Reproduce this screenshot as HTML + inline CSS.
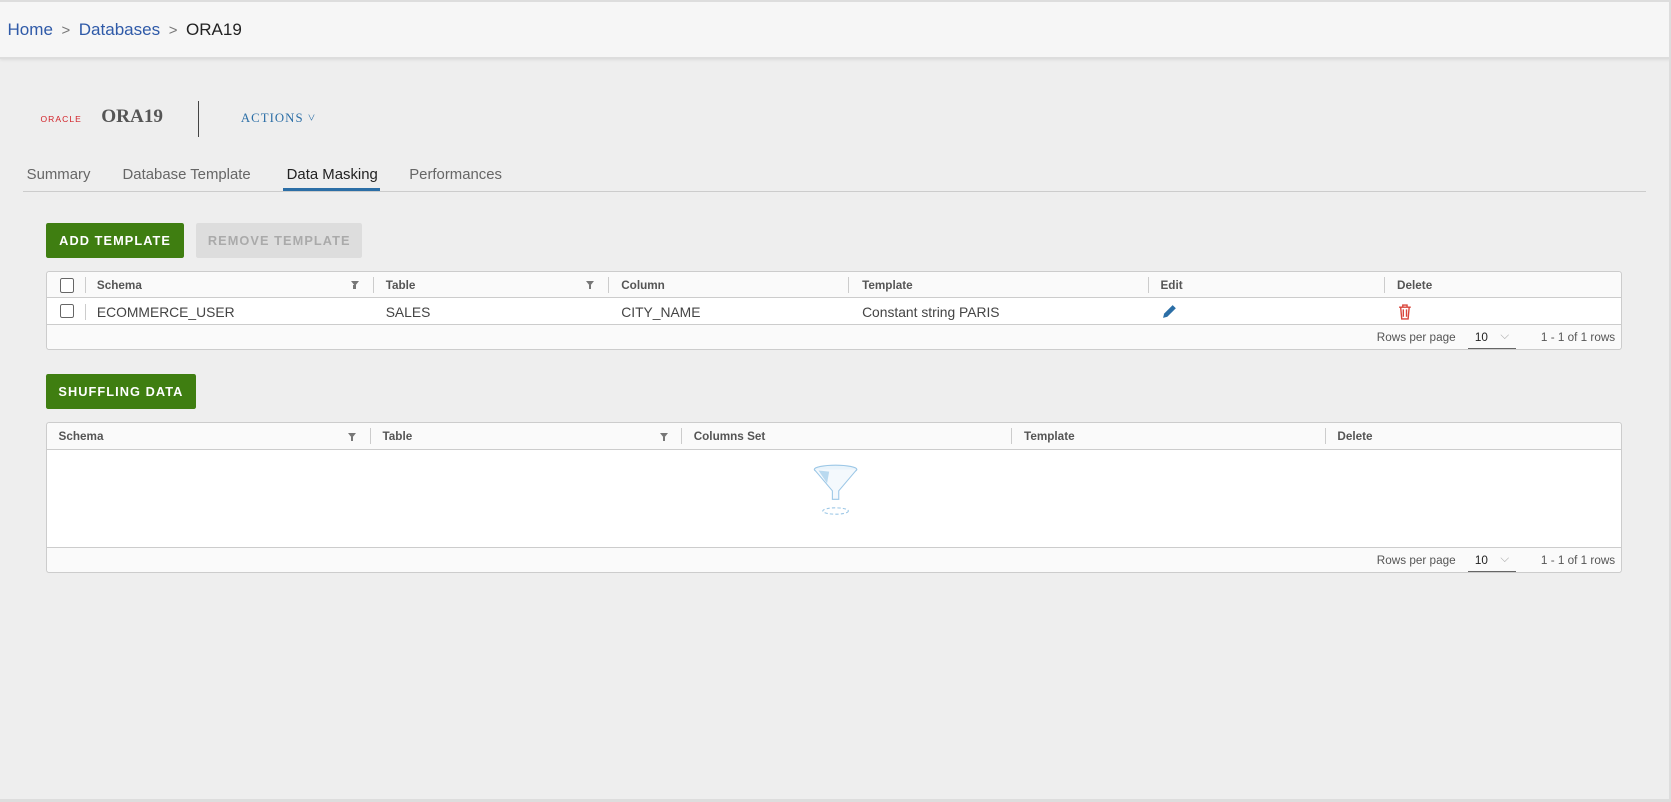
<!DOCTYPE html>
<html><head><style>
html{zoom:1.0657}
body{margin:0;width:1568px;height:753px;background:#eeeeee;font-family:"Liberation Sans",sans-serif;position:relative;overflow:hidden;color:#333}
.top{position:absolute;left:0;top:0;width:1566px;height:52px;background:#f6f6f6;border-top:2px solid #ddd;border-bottom:2px solid #ddd;border-right:2px solid #ddd;box-shadow:0 1px 3px rgba(0,0,0,.08)}
.bc{position:absolute;left:7px;top:17px;font-size:16px;color:#222}
.bc a{color:#2f5aa8;text-decoration:none}
.bc .s{color:#777;margin:0 8px;font-size:14px}
.abs{position:absolute}
.tabs span{position:absolute;top:157px;font-size:14px;color:#666}
.btn{position:absolute;height:33px;line-height:33px;font-size:12px;font-weight:bold;letter-spacing:1px;text-align:center;border-radius:2px}
.grid{position:absolute;left:43px;width:1477px;background:#fff;border:1px solid #ccc;border-radius:3px;font-size:13px;overflow:hidden}
.hd{height:24px;background:#fafafa;border-bottom:1px solid #ccc;position:relative;font-size:11px;font-weight:bold;color:#555}
.hd span,.row span{position:absolute;top:7px}
.sep{position:absolute;top:5px;width:1px;height:15px;background:#ccc}
.row{position:relative;height:24px;border-bottom:1px solid #ccc}
.row span{top:5px;color:#444}
.ft{height:23px;background:#fafafa;position:relative;font-size:11px;color:#555}
.cb{position:absolute;left:12px;width:12px;height:12px;border:1px solid #666;border-radius:2px;background:#fff}
.flt{position:absolute;top:9px;width:0;height:0;border-left:4px solid transparent;border-right:4px solid transparent;border-top:5px solid #777}
.flt:after{content:"";position:absolute;left:-1px;top:-1px;width:2px;height:4px;background:#777}
</style></head><body>
<div class="top"><div class="bc"><a>Home</a><span class="s">&gt;</span><a>Databases</a><span class="s">&gt;</span>ORA19</div></div>
<div class="abs" style="left:38px;top:107px;color:#d2232a;font-size:8px;letter-spacing:1px">ORACLE</div>
<div class="abs" style="left:95px;top:99px;font-family:'Liberation Serif',serif;font-weight:bold;font-size:18px;color:#555">ORA19</div>
<div class="abs" style="left:186px;top:95px;width:1px;height:34px;background:#444"></div>
<div class="abs" style="left:226px;top:104px;font-family:'Liberation Serif',serif;font-size:12px;letter-spacing:1px;color:#2b6ea6">ACTIONS ˅</div>
<div class="tabs"><span style="left:25px">Summary</span><span style="left:115px">Database Template</span><span style="left:269px;color:#222">Data Masking</span><span style="left:384px">Performances</span></div>
<div class="abs" style="left:266px;top:176px;width:91px;height:3px;background:#2b6ea6"></div>
<div class="abs" style="left:22px;top:179px;width:1523px;height:1px;background:#ccc"></div>
<div class="btn" style="left:43px;top:209px;width:130px;background:#3f7e11;color:#fff">ADD TEMPLATE</div>
<div class="btn" style="left:184px;top:209px;width:156px;background:#ddd;color:#aaa">REMOVE TEMPLATE</div>
<div class="grid" style="top:254px">
<div class="hd"><div class="cb" style="top:6px"></div><div class="sep" style="left:36px"></div>
<span style="left:47px">Schema</span><div class="flt" style="left:285px"></div><div class="sep" style="left:306px"></div>
<span style="left:318px">Table</span><div class="flt" style="left:506px"></div><div class="sep" style="left:527px"></div>
<span style="left:539px">Column</span><div class="sep" style="left:752px"></div>
<span style="left:765px">Template</span><div class="sep" style="left:1033px"></div>
<span style="left:1045px">Edit</span><div class="sep" style="left:1255px"></div>
<span style="left:1267px">Delete</span></div>
<div class="row"><div class="cb" style="top:5px"></div><div class="sep" style="left:36px;top:5px"></div>
<span style="left:47px">ECOMMERCE_USER</span><span style="left:318px">SALES</span><span style="left:539px">CITY_NAME</span><span style="left:765px">Constant string PARIS</span>
<svg style="position:absolute;left:1046px;top:5px" width="14" height="14" viewBox="0 0 14 14"><path d="M1 13 L2 9 L10 1 L13 4 L5 12 Z" fill="#2b6ea6"/></svg>
<svg style="position:absolute;left:1268px;top:5px" width="13" height="15" viewBox="0 0 13 15"><path d="M1 3h11M4.5 3V1h4v2M2.5 3l1 11h6l1-11M5 5v7M8 5v7" fill="none" stroke="#d9453b" stroke-width="1.3"/></svg></div>
<div class="ft"><span style="position:absolute;left:1248px;top:6px">Rows per page</span><span style="position:absolute;left:1340px;top:6px;color:#222">10</span><span style="position:absolute;left:1364px;top:4px;color:#aaa">⌵</span><div style="position:absolute;left:1334px;top:22px;width:45px;height:1px;background:#666"></div><span style="position:absolute;left:1402px;top:6px">1 - 1 of 1 rows</span></div>
</div>
<div class="btn" style="left:43px;top:351px;width:141px;background:#3f7e11;color:#fff">SHUFFLING DATA</div>
<div class="grid" style="top:396px">
<div class="hd" style="height:24px"><span style="left:11px">Schema</span><div class="flt" style="left:283px"></div><div class="sep" style="left:303px"></div>
<span style="left:315px">Table</span><div class="flt" style="left:575px"></div><div class="sep" style="left:595px"></div>
<span style="left:607px">Columns Set</span><div class="sep" style="left:905px"></div>
<span style="left:917px">Template</span><div class="sep" style="left:1199px"></div><span style="left:1211px">Delete</span></div>
<div style="position:relative;height:91px;border-bottom:1px solid #ccc">
<svg style="position:absolute;left:716px;top:12px" width="48" height="52" viewBox="0 0 48 52"><ellipse cx="24" cy="7" rx="20" ry="4" fill="#eaf4fb" stroke="#9cc7e6"/><path d="M4 7 L21 27 V35 H27 V27 L44 7" fill="#f4f9fd" stroke="#9cc7e6"/><path d="M8 8 L16 20 L18 9Z" fill="#b9d9ef"/><ellipse cx="24" cy="46" rx="12" ry="3" fill="none" stroke="#9cc7e6" stroke-dasharray="3 2"/></svg></div>
<div class="ft"><span style="position:absolute;left:1248px;top:6px">Rows per page</span><span style="position:absolute;left:1340px;top:6px;color:#222">10</span><span style="position:absolute;left:1364px;top:4px;color:#aaa">⌵</span><div style="position:absolute;left:1334px;top:22px;width:45px;height:1px;background:#666"></div><span style="position:absolute;left:1402px;top:6px">1 - 1 of 1 rows</span></div>
</div>
<div class="abs" style="left:1566px;top:52px;width:2px;height:701px;background:#ddd"></div>
<div class="abs" style="left:0;top:750px;width:1568px;height:3px;background:#ddd"></div>
</body></html>
